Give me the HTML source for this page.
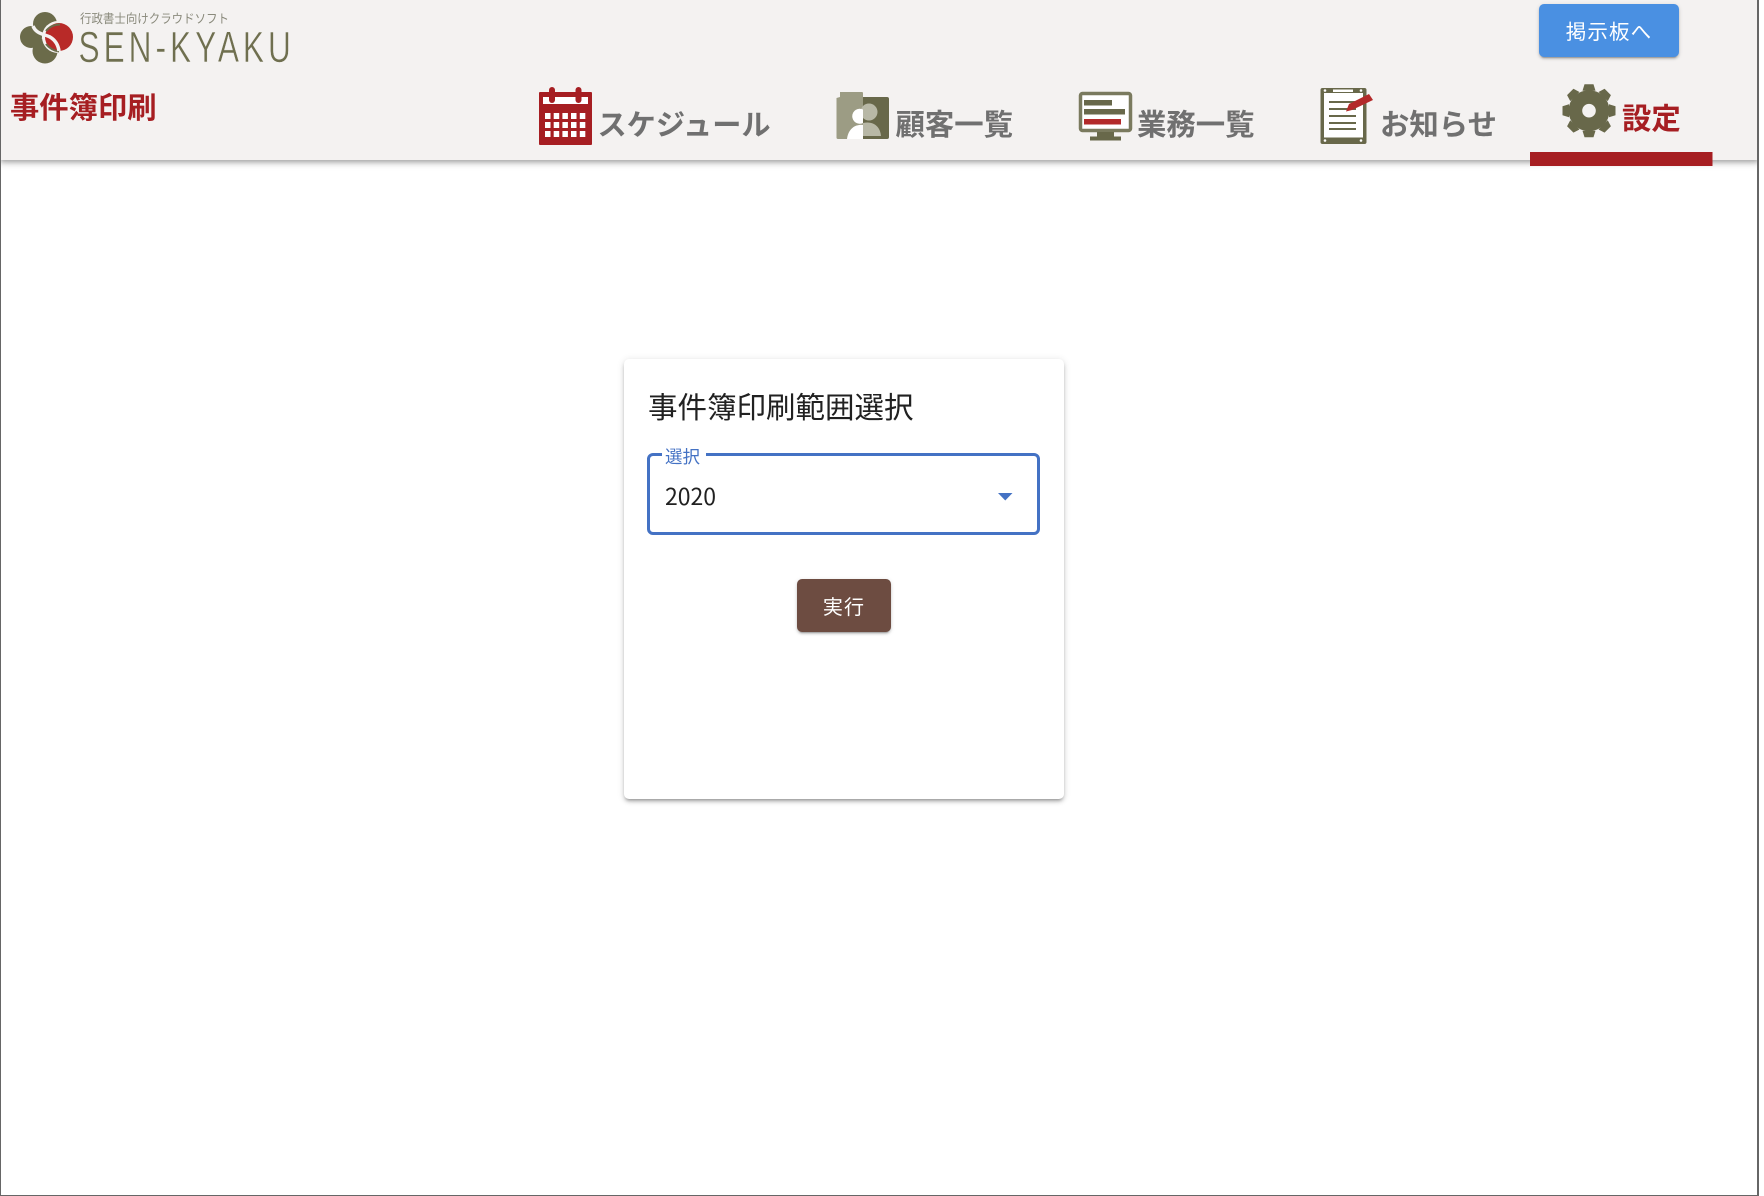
<!DOCTYPE html>
<html lang="ja"><head><meta charset="utf-8"><title>事件簿印刷</title>
<style>
html,body{margin:0;padding:0;background:#fff}
body{position:relative;width:1764px;height:1196px;overflow:hidden;font-family:"Liberation Sans","Noto Sans CJK JP",sans-serif}
.a{position:absolute;white-space:nowrap}
#frame{left:0;top:0;width:1759px;height:1196px;box-sizing:border-box;border-left:1px solid #666;border-right:2px solid #666;border-bottom:1px solid #666;z-index:9;pointer-events:none}
#clip{left:0;top:0;width:1759px;height:200px;overflow:hidden}
#hdr{left:0;top:0;width:1759px;height:160px;background:#f4f2f1;box-shadow:0 2px 4px -1px rgba(0,0,0,.2),0 4px 5px 0 rgba(0,0,0,.14),0 1px 10px 0 rgba(0,0,0,.12)}
.nav{font-size:29.4px;font-weight:700;color:#707070;line-height:40px;height:40px}
.btn{border-radius:5px;color:#fff;text-align:center;box-shadow:0 3px 1px -2px rgba(0,0,0,.2),0 2px 2px 0 rgba(0,0,0,.14),0 1px 5px 0 rgba(0,0,0,.12);letter-spacing:1.1px}
#card{left:624px;top:359px;width:440px;height:440px;background:#fff;border-radius:5px;box-shadow:0 3px 3px -2px rgba(0,0,0,.3),0 3px 4px 0 rgba(0,0,0,.14),0 1px 8px 0 rgba(0,0,0,.12)}
</style></head><body>
<div class="a" id="clip"><div class="a" id="hdr"></div></div>
<svg class="a" style="left:0;top:0" width="1764" height="170" viewBox="0 0 1764 170">
 <!-- logo mark -->
 <circle cx="45" cy="24" r="12" fill="#6b6b4a"/>
 <circle cx="31" cy="37" r="11" fill="#6b6b4a"/>
 <circle cx="45" cy="51" r="12.500" fill="#6b6b4a"/>
 <circle cx="58" cy="37" r="16" fill="#f4f2f1"/>
 <circle cx="59" cy="37" r="14" fill="#b82a28"/>
 <path d="M46 31C50 26 55 24.500 60 24.500" fill="none" stroke="#6b6b4a" stroke-width="2"/>
 <path d="M46 44C50 49 55 51 59 51.500" fill="none" stroke="#6b6b4a" stroke-width="2"/>
 <path d="M33 26C36 34 44 34 50 37C55 40 58 44 59 51" fill="none" stroke="#f4f2f1" stroke-width="3.500"/>
 <!-- logo text -->
 <text transform="translate(78.500 62) scale(.72 1)" font-family="Liberation Sans" font-size="44" letter-spacing="5.500" fill="#6f6f4f" stroke="#f4f2f1" stroke-width=".5" paint-order="fill stroke">SEN-KYAKU</text>
 <text x="80" y="23" font-family="Noto Sans CJK JP" font-weight="400" font-size="12.500" fill="#8a8a7c" textLength="149" lengthAdjust="spacingAndGlyphs">行政書士向けクラウドソフト</text>

 <!-- calendar -->
 <rect x="539" y="92" width="53" height="53" rx="1" fill="#a61e22"/>
 <rect x="543" y="97" width="45" height="7" fill="#fff"/>
 <rect x="549" y="87" width="6" height="16" rx="3" fill="#a61e22"/>
 <rect x="575.500" y="87" width="6" height="16" rx="3" fill="#a61e22"/>
 <g fill="#fff">
  <rect x="545" y="113" width="5.500" height="6"/><rect x="553.700" y="113" width="5.500" height="6"/><rect x="562.400" y="113" width="5.500" height="6"/><rect x="571" y="113" width="5.500" height="6"/><rect x="579.800" y="113" width="5.500" height="6"/>
  <rect x="545" y="122" width="5.500" height="6"/><rect x="553.700" y="122" width="5.500" height="6"/><rect x="562.400" y="122" width="5.500" height="6"/><rect x="571" y="122" width="5.500" height="6"/><rect x="579.800" y="122" width="5.500" height="6"/>
  <rect x="545" y="131" width="5.500" height="6"/><rect x="553.700" y="131" width="5.500" height="6"/><rect x="562.400" y="131" width="5.500" height="6"/><rect x="571" y="131" width="5.500" height="6"/><rect x="579.800" y="131" width="5.500" height="6"/>
 </g>

 <!-- folder / customers -->
 <path d="M840 92H862a1 1 0 0 1 1 1V139H838a1.500 1.500 0 0 1-1.500-1.500V98L840 97Z" fill="#9c9c84"/>
 <path d="M863 97H887a2 2 0 0 1 2 2V137a2 2 0 0 1-2 2H863Z" fill="#68684a"/>
 <circle cx="869" cy="112" r="8.500" fill="#b8b8a6"/>
 <path d="M863 123C872 121 880 125 881 136H863Z" fill="#b8b8a6"/>
 <path d="M863 109.500A7.500 7.500 0 1 0 863 123Z" fill="#fff"/>
 <path d="M863 125C854 124 848 130 847 139H863Z" fill="#fff"/>

 <!-- monitor -->
 <rect x="1080.500" y="93.500" width="50" height="37" rx="2" fill="#fff" stroke="#7a7a5e" stroke-width="3.500"/>
 <rect x="1084" y="100" width="28" height="5.500" fill="#68684a"/>
 <rect x="1084" y="109" width="41" height="5.500" fill="#68684a"/>
 <rect x="1084" y="119" width="37" height="5.500" fill="#b32a2a"/>
 <rect x="1097" y="132" width="17" height="5" fill="#68684a"/>
 <rect x="1090" y="136.500" width="31" height="4" fill="#68684a"/>

 <!-- memo -->
 <rect x="1320.500" y="88" width="46" height="56" rx="2" fill="#68684a"/>
 <rect x="1324" y="93" width="39" height="44.500" fill="#fff"/>
 <rect x="1333" y="89.500" width="20" height="2.500" fill="#fff"/>
 <g fill="#fff"><circle cx="1325" cy="90.500" r="1.300"/><circle cx="1361" cy="90.500" r="1.300"/><circle cx="1325" cy="140.500" r="1.300"/><circle cx="1361" cy="140.500" r="1.300"/></g>
 <g fill="#68684a"><rect x="1329" y="101" width="27" height="2"/><rect x="1329" y="108" width="27" height="2"/><rect x="1329" y="115" width="27" height="2"/><rect x="1329" y="122" width="27" height="2"/><rect x="1329" y="128" width="27" height="2"/></g>
 <path d="M1346 111.500L1349 104L1369 94L1373 100L1352 110Z" fill="#b32a2a"/>

 <!-- gear -->
 <g transform="translate(1589 110.700)" fill="#68684a">
  <path d="M-6.500-20L-4.500-26.500H4.500L6.500-20Z"/>
  <path transform="rotate(45)" d="M-6.500-20L-4.500-26.500H4.500L6.500-20Z"/>
  <path transform="rotate(90)" d="M-6.500-20L-4.500-26.500H4.500L6.500-20Z"/>
  <path transform="rotate(135)" d="M-6.500-20L-4.500-26.500H4.500L6.500-20Z"/>
  <path transform="rotate(180)" d="M-6.500-20L-4.500-26.500H4.500L6.500-20Z"/>
  <path transform="rotate(225)" d="M-6.500-20L-4.500-26.500H4.500L6.500-20Z"/>
  <path transform="rotate(270)" d="M-6.500-20L-4.500-26.500H4.500L6.500-20Z"/>
  <path transform="rotate(315)" d="M-6.500-20L-4.500-26.500H4.500L6.500-20Z"/>
  <circle r="20.500"/>
  <circle r="6.800" fill="#f4f2f1"/>
 </g>
 <rect x="1530" y="152" width="182.500" height="14" fill="#a61e22"/>
</svg>

<div class="a" style="left:10px;top:89px;font-size:29.300px;font-weight:700;color:#a61e22;line-height:40px">事件簿印刷</div>
<div class="a nav" style="left:597.500px;top:106px;font-size:29.200px">スケジュール</div>
<div class="a nav" style="left:895.500px;top:106px">顧客一覧</div>
<div class="a nav" style="left:1137px;top:106px">業務一覧</div>
<div class="a nav" style="left:1380px;top:106px">お知らせ</div>
<div class="a nav" style="left:1622px;top:100px;color:#a61e22">設定</div>
<div class="a btn" style="left:1539px;top:4px;width:140px;height:53px;background:#4a90e2;font-size:20.500px;line-height:57px">掲示板へ</div>

<div class="a" id="card"></div>
<div class="a" style="left:648px;top:389px;font-size:29.500px;color:#212121;line-height:40px">事件簿印刷範囲選択</div>
<div class="a" style="left:647px;top:453px;width:393px;height:82px;box-sizing:border-box;border:3px solid #4472c4;border-radius:6px"></div>
<div class="a" style="left:662px;top:450px;width:44px;height:8px;background:#fff"></div>
<div class="a" style="left:665px;top:446px;font-size:17.500px;color:#4472c4;line-height:22px">選択</div>
<div class="a" style="left:665px;top:479px;font-size:23px;color:#212121;line-height:32px;font-family:'Noto Sans CJK JP',sans-serif">2020</div>
<svg class="a" style="left:998px;top:493px" width="15" height="8"><path d="M0 0H14.500L7.250 7.500Z" fill="#4472c4"/></svg>
<div class="a btn" style="left:797px;top:579px;width:94px;height:53px;background:#6d4c41;font-size:20px;line-height:59px">実行</div>
<div class="a" id="frame"></div>
</body></html>
